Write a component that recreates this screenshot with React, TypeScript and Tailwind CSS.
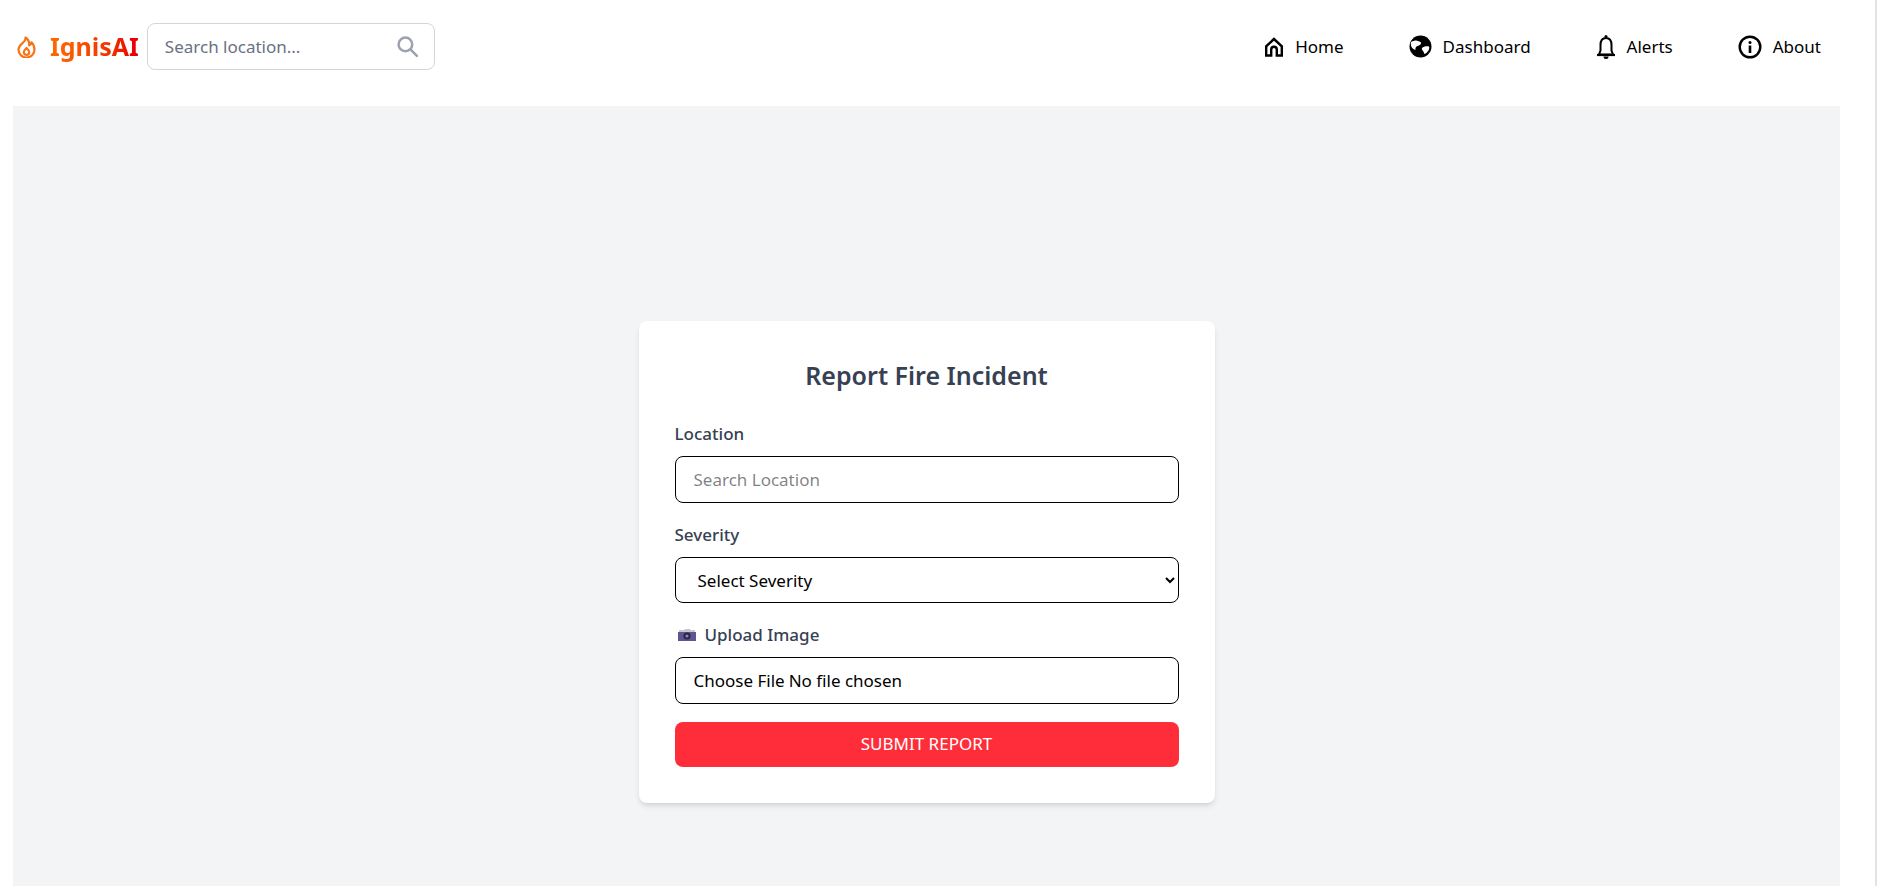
const font = "font-['Noto_Sans',sans-serif]";

function FlameIcon() {
  return (
    <svg className="h-[22px] w-[19px]" viewBox="0 0 19 22" fill="none" stroke="#f97316" strokeWidth="2.200" strokeLinejoin="round">
      <path d="M8.500 1.500c.5 2.400-1 4-2.800 5.500C3.700 8.700 1.500 10.500 1.500 13.500a8 8 0 0 0 16 0c0-2.800-1.400-5.500-3-7.200-.3 1.700-1 2.700-2.300 3.100C12.500 6 11.200 3.200 8.500 1.500Z" />
      <path d="M9.500 12c-1.500 1.500-2.700 2.600-2.700 4.200a2.700 2.700 0 0 0 5.400 0C12.200 14.600 11 13.500 9.500 12Z" />
    </svg>
  );
}

function SearchIcon() {
  return (
    <svg className="h-[23px] w-[23px]" viewBox="0 0 22 22" fill="none" stroke="#9ca3af" strokeWidth="2.400" strokeLinecap="round">
      <circle cx="9" cy="9" r="6.500" />
      <path d="M14 14l6 6" />
    </svg>
  );
}

// camera emoji, no emoji font in the sandbox
function CameraIcon() {
  return (
    <svg className="h-[12px] w-[18px]" viewBox="0 0 18 12">
      <path d="M3 1h3l1-1h5l1 1h4v2H1V1h2Z" fill="#c9c6cf" />
      <rect x="0" y="3" width="18" height="9" fill="#5f5590" />
      <circle cx="9" cy="7" r="3.600" fill="#2b2540" />
      <circle cx="9" cy="7" r="1.600" fill="#8d86c0" />
    </svg>
  );
}

function HomeIcon() {
  return (
    <svg className="h-[20px] w-[20px]" viewBox="0 0 20 20" fill="none" stroke="#000" strokeWidth="2.400">
      <path d="M10 2 2.200 9.300V18.500H7.200V12.500a2.800 2.800 0 0 1 5.600 0V18.500H17.800V9.300Z" />
    </svg>
  );
}

function GlobeIcon() {
  return (
    <svg className="h-[23px] w-[23px]" viewBox="0 0 23 23">
      <circle cx="11.500" cy="11.500" r="11" fill="#000" />
      <path d="M2 7c2-1 3.500-1.500 5-1.500 1.500.5 4 .5 5 2 .5 1.500-1.500 3-3.500 3.500-1.500.5-2.500 2-2 4-1.500-.5-3-1.500-4-3-.7-1.500-.8-3.500-.5-5Z" fill="#fff" />
      <path d="M13 13c1.500-1.300 4-2 7-1.500.5.5.3 2.500-.5 4-1 1.500-2.500 3-4 3.500-.7-1-.5-2-1.500-3-.8-.8-1.500-2-1-3Z" fill="#fff" />
    </svg>
  );
}

function BellIcon() {
  return (
    <svg className="h-[26px] w-[20px]" viewBox="0 0 20 26" fill="none" stroke="#000" strokeWidth="2">
      <circle cx="10" cy="2.500" r="1.500" fill="#000" stroke="none" />
      <path d="M10 4C6.200 4 4.500 7 4.500 11V16.500L3 20.500H17L15.500 16.500V11C15.500 7 13.800 4 10 4Z" />
      <path d="M1 21H19" strokeWidth="2.200" />
      <path d="M7.500 22.500a2.500 2.500 0 0 0 5 0Z" fill="#000" stroke="none" />
    </svg>
  );
}

function InfoIcon() {
  return (
    <svg className="h-[24px] w-[24px]" viewBox="0 0 24 24" fill="none" stroke="#000" strokeWidth="2.400">
      <circle cx="12" cy="12" r="10.300" />
      <circle cx="12" cy="7.500" r="1.500" fill="#000" stroke="none" />
      <path d="M12 10.500V18" strokeWidth="2.600" />
    </svg>
  );
}

const navItems = [
  { label: 'Home', icon: <HomeIcon /> },
  { label: 'Dashboard', icon: <GlobeIcon /> },
  { label: 'Alerts', icon: <BellIcon /> },
  { label: 'About', icon: <InfoIcon /> },
];

export default function App() {
  return (
    <div className={`h-[886px] w-[1879px] overflow-hidden bg-white ${font}`}>
      <div className="w-[1877px] border-r-2 border-[#e3e3e3]">
        <header className="flex h-[106px] items-center justify-between pb-[13px] pl-[17px] pr-[54px]">
          <div className="flex items-center">
            <FlameIcon />
            <span className="ml-[14px] bg-gradient-to-r from-orange-500 to-red-600 bg-clip-text text-[25px] font-bold text-transparent">
              IgnisAI
            </span>
            <div className="ml-[8px] flex h-[47px] w-[288px] items-center justify-between rounded-lg border border-gray-300 pl-[17px] pr-[15px]">
              <input placeholder="Search location..." className="w-[220px] text-[17px] outline-none placeholder:text-gray-500" />
              <SearchIcon />
            </div>
          </div>
          <nav className="flex items-center gap-[65px]">
            {navItems.map((item) => (
              <a key={item.label} className="flex items-center gap-[11px] text-[17px] text-black">
                {item.icon}
                <span>{item.label}</span>
              </a>
            ))}
          </nav>
        </header>

        <main className="ml-[13px] flex h-[911px] w-[1827px] items-center justify-center bg-[#f3f4f6]">
          <div className="w-[576px] rounded-lg bg-white p-[36px] shadow-md">
            <h2 className="mb-[27px] text-center text-[25px] font-semibold text-gray-700">Report Fire Incident</h2>
            <form>
              <label className="mb-[9px] block text-[17px] font-medium text-gray-700">Location</label>
              <input
                placeholder="Search Location"
                className="mb-[19px] block h-[47px] w-full rounded-lg border border-black px-[18px] text-[17px] outline-none"
              />
              <label className="mb-[10px] block text-[17px] font-medium text-gray-700">Severity</label>
              <select className="mb-[19px] block h-[46px] w-full rounded-lg border border-black px-[18px] text-[17px] outline-none">
                <option>Select Severity</option>
              </select>
              <label className="mb-[9px] flex items-center gap-[9px] pl-[3px] text-[17px] font-medium text-gray-700">
                <CameraIcon />
                Upload Image
              </label>
              <input type="file" className="mb-[18px] block h-[47px] w-full rounded-lg border border-black px-[18px] py-[10px] text-[17px]" />
              <button type="button" className="h-[45px] w-full rounded-lg bg-[#ff2d3a] text-[17px] text-white">
                SUBMIT REPORT
              </button>
            </form>
          </div>
        </main>
      </div>
    </div>
  );
}
